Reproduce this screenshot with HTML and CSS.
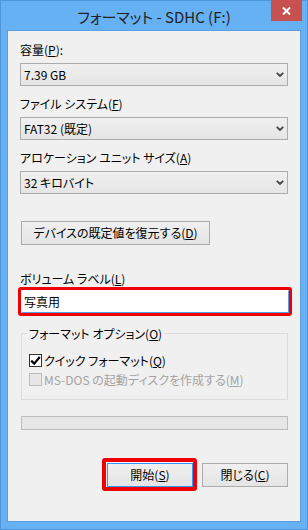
FILE: index.html
```html
<!DOCTYPE html>
<html lang="ja">
<head>
<meta charset="utf-8">
<title>フォーマット - SDHC (F:)</title>
<link rel="stylesheet" href="styles.css">
</head>
<body>
<div class="window">
  <div class="titlebar">
    <span class="title">フォーマット - SDHC (F:)</span>
    <button class="close" aria-label="閉じる">
      <svg width="9" height="8" viewBox="0 0 9 8"><path d="M1 0.5 L8 7.5 M8 0.5 L1 7.5" stroke="#fff" stroke-width="2" fill="none"/></svg>
    </button>
  </div>
  <div class="client">
    <div class="label">容量(<u>P</u>):</div>
    <div class="combo"><span>7.39 GB</span><svg class="arrow" width="8" height="5" viewBox="0 0 8 5"><path d="M0.8 0.8 L4 4 L7.2 0.8" stroke="#444" stroke-width="1.8" fill="none"/></svg></div>

    <div class="label field">ファイル システム(<u>F</u>)</div>
    <div class="combo"><span>FAT32 (既定)</span><svg class="arrow" width="8" height="5" viewBox="0 0 8 5"><path d="M0.8 0.8 L4 4 L7.2 0.8" stroke="#444" stroke-width="1.8" fill="none"/></svg></div>

    <div class="label field">アロケーション ユニット サイズ(<u>A</u>)</div>
    <div class="combo"><span>32 キロバイト</span><svg class="arrow" width="8" height="5" viewBox="0 0 8 5"><path d="M0.8 0.8 L4 4 L7.2 0.8" stroke="#444" stroke-width="1.8" fill="none"/></svg></div>

    <button class="btn restore">デバイスの既定値を復元する(<u>D</u>)</button>

    <div class="label vol">ボリューム ラベル(<u>L</u>)</div>
    <div class="mark mark-input"><div class="input">写真用</div></div>

    <div class="group">
      <div class="group-title">フォーマット オプション(<u>O</u>)</div>
      <div class="check"><span class="box on"><svg width="11" height="11" viewBox="0 0 11 11"><path d="M1.2 5.6 L4.2 8.6 L9.8 2" stroke="#000" stroke-width="2.2" fill="none"/></svg></span><span>クイック フォーマット(<u>Q</u>)</span></div>
      <div class="check disabled"><span class="box"></span><span>MS-DOS の起動ディスクを作成する(<u>M</u>)</span></div>
    </div>

    <div class="progress"></div>

    <div class="actions">
      <div class="mark mark-btn"><button class="btn default">開始(<u>S</u>)</button></div>
      <button class="btn cancel">閉じる(<u>C</u>)</button>
    </div>
  </div>
</div>
</body>
</html>
```

FILE: styles.css
```css
* { box-sizing: border-box; }
html, body { margin: 0; padding: 0; }
body {
  width: 308px;
  height: 530px;
  font-family: "Noto Sans CJK JP", "Noto Sans", sans-serif;
  font-size: 12px;
  font-feature-settings: "palt";
  color: #000;
  background: #f0f0f0;
}
u { text-decoration: underline; text-underline-offset: 1px; }

.window {
  position: relative;
  width: 308px;
  height: 530px;
  background: #66b1f3;
  border: 1px solid #4f97db;
  display: flex;
  flex-direction: column;
}
.titlebar {
  height: 29px;
  display: flex;
  justify-content: center;
  align-items: center;
  padding-top: 3px;
}
.title {
  font-size: 15px;
  line-height: 20px;
  color: #222;
}
.close {
  position: absolute;
  top: -1px;
  right: 5px;
  width: 31px;
  height: 21px;
  background: #c75050;
  border: 0;
  padding: 0;
  display: flex;
  align-items: center;
  justify-content: center;
}

.client {
  flex: 1;
  margin: 0 6px 7px;
  background: #f0f0f0;
  border: 1px solid #5a9ee0;
  padding: 11px 12px 0;
  display: flex;
  flex-direction: column;
  align-items: flex-start;
}
.label {
  height: 16px;
  line-height: 16px;
  white-space: nowrap;
}
.label.field { margin-top: 10px; }
.combo {
  margin-top: 5px;
  width: 268px;
  height: 23px;
  border: 1px solid #acacac;
  background: linear-gradient(#f0f0f0, #e5e5e5);
  display: flex;
  align-items: center;
  justify-content: space-between;
  padding: 0 3px 0 3px;
  line-height: 16px;
}
.arrow { display: block; margin-right: 0; }

.btn {
  font: inherit;
  color: #000;
  height: 24px;
  border: 1px solid #acacac;
  background: linear-gradient(#f0f0f0, #e5e5e5);
  padding: 0;
  line-height: 16px;
  white-space: nowrap;
}
.restore {
  margin-top: 27px;
  margin-left: 1px;
  width: 189px;
}
.label.vol { margin-top: 26px; }

.mark {
  border: 4px solid #f00000;
  border-radius: 3px;
}
.mark-input {
  border-width: 3px;
  margin-left: -2px;
  width: 274px;
}
.input {
  height: 23px;
  background: #fff;
  border: 1px solid #569de5;
  border-top-color: #fff;
  border-left-color: #fff;
  padding-left: 2px;
  line-height: 21px;
}

.group {
  position: relative;
  margin-top: 17px;
  margin-left: 1px;
  width: 267px;
  border: 1px solid #dcdcdc;
  padding: 17px 0 10px 7px;
}
.group-title {
  position: absolute;
  top: -8px;
  left: 5px;
  padding: 0 2px;
  line-height: 15px;
  background: #f0f0f0;
  white-space: nowrap;
}
.check {
  height: 19px;
  display: flex;
  align-items: center;
  gap: 2px;
  white-space: nowrap;
}
.box {
  width: 13px;
  height: 13px;
  border: 1px solid #333;
  background: #fff;
  display: flex;
  align-items: center;
  justify-content: center;
  flex: none;
}
.check.disabled { color: #a3a3a3; }
.check.disabled .box {
  background: #e6e6e6;
  border-color: #bcbcbc;
}

.progress {
  margin-top: 16px;
  margin-left: 1px;
  width: 267px;
  height: 14px;
  border: 1px solid #bcbcbc;
  background: #e6e6e6;
}

.actions {
  margin-top: 28px;
  align-self: stretch;
  display: flex;
  justify-content: flex-end;
  align-items: flex-start;
}
.mark-btn {
  padding: 1px 0 0 1px;
}
.default {
  width: 86px;
  border-color: #3399ff;
  display: block;
}
.cancel {
  width: 86px;
  margin-top: 5px;
  margin-left: 5px;
}
```
